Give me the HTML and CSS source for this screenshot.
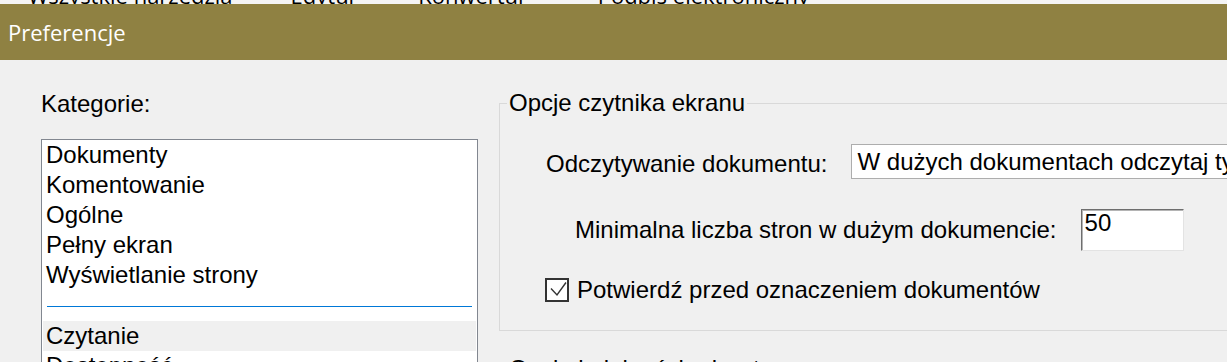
FILE: index.html
```html
<!DOCTYPE html>
<html lang="pl">
<head>
<meta charset="utf-8">
<title>Preferencje</title>
<link rel="stylesheet" href="styles.css">
</head>
<body>
<div class="menubar">
  <div class="menubar-inner">
    <span class="menu-item m1">Wszystkie narzędzia</span>
    <span class="menu-item m2">Edytuj</span>
    <span class="menu-item m3">Konwertuj</span>
    <span class="menu-item m4">Podpis elektroniczny</span>
  </div>
</div>
<div class="titlebar">Preferencje</div>
<div class="main">
  <div class="left">
    <div class="cat-label">Kategorie:</div>
    <div class="listbox">
      <div class="item">Dokumenty</div>
      <div class="item">Komentowanie</div>
      <div class="item">Ogólne</div>
      <div class="item">Pełny ekran</div>
      <div class="item">Wyświetlanie strony</div>
      <div class="sep"><div class="sep-line"></div></div>
      <div class="item sel">Czytanie</div>
      <div class="item">Dostępność</div>
      <div class="item">Formularze</div>
    </div>
  </div>
  <div class="right">
    <fieldset class="group">
      <legend class="legend">Opcje czytnika ekranu</legend>
      <div class="group-body">
        <div class="row row1">
          <span class="lbl lbl1">Odczytywanie dokumentu:</span>
          <div class="combo">W dużych dokumentach odczytaj tylko widoczne strony</div>
        </div>
        <div class="row row2">
          <span class="lbl lbl2">Minimalna liczba stron w dużym dokumencie:</span>
          <div class="num">50</div>
        </div>
        <div class="row row3">
          <span class="check"><svg width="20" height="20" viewBox="0 0 20 20"><polyline points="4,8.5 10,15 19,2.5" fill="none" stroke="#333" stroke-width="1.4"/></svg></span>
          <span class="lbl lbl3">Potwierdź przed oznaczeniem dokumentów</span>
        </div>
      </div>
    </fieldset>
    <fieldset class="group group2">
      <legend class="legend">Opcje kolejności odczytu</legend>
      <div class="group-body tall"></div>
    </fieldset>
  </div>
</div>
</body>
</html>
```

FILE: styles.css
```css
* { box-sizing: border-box; }
html, body { margin: 0; padding: 0; }
body {
  width: 1227px;
  height: 362px;
  overflow: hidden;
  background: #f0f0f0;
  color: #000;
  font-family: "Liberation Sans", Arial, sans-serif;
  font-size: 24px;
}
.menubar {
  height: 4px;
  overflow: hidden;
  background: #f4f4f4;
  font-family: "Open Sans", "Noto Sans", sans-serif;
  font-size: 22px;
  line-height: 22px;
  white-space: nowrap;
}
.menubar-inner {
  display: flex;
  margin-top: -16px;
}
.m1 { margin-left: 28px; }
.m2 { margin-left: 58px; }
.m3 { margin-left: 64px; }
.m4 { margin-left: 74px; }
.titlebar {
  height: 56px;
  background: #8f8142;
  color: #fff;
  display: flex;
  align-items: center;
  padding-left: 8px;
  font-family: "Open Sans", "Noto Sans", sans-serif;
  font-size: 22px;
}
.main {
  display: flex;
  gap: 21px;
  padding: 30px 0 0 41px;
}
.left { width: 437px; flex: 0 0 437px; }
.cat-label {
  height: 28px;
  line-height: 28px;
  margin-bottom: 21px;
}
.listbox {
  border: 1px solid #828790;
  background: #fff;
  padding: 0 1px;
  height: 400px;
}
.item {
  height: 30px;
  line-height: 30px;
  padding-left: 3px;
  white-space: nowrap;
}
.item.sel { background: #f0f0f0; }
.sep {
  height: 31px;
  padding: 16px 4px 0 4px;
}
.sep-line { height: 1px; background: #0078d7; }
.right { flex: 0 0 760px; }
.group {
  margin: 1px 0 0 0;
  padding: 0;
  border: 1px solid #d9d9d9;
  min-width: 0;
}
.legend {
  margin-left: 7px;
  padding: 0 2px;
  line-height: 24px;
}
.group-body {
  padding: 29px 0 28px 46px;
}
.row { display: flex; align-items: flex-start; }
.lbl { line-height: 24px; white-space: nowrap; }
.lbl1 { padding-top: 8px; margin-right: 24px; }
.combo {
  width: 420px;
  height: 35px;
  border: 1px solid #adadad;
  background: #fff;
  padding-left: 5px;
  line-height: 33px;
  white-space: nowrap;
  overflow: hidden;
}
.row2 { margin-top: 30px; padding-left: 29px; }
.lbl2 { padding-top: 9px; margin-right: 24px; }
.num {
  width: 103px;
  height: 42px;
  background: #fff;
  border: 1px solid;
  border-color: #6e6e6e #e3e3e3 #e3e3e3 #6e6e6e;
  box-shadow: inset 1px 1px 0 #b4b4b4;
  padding: 1px 0 0 3px;
  line-height: 24px;
}
.row3 { margin-top: 27px; margin-left: -1px; }
.check {
  width: 24px;
  height: 24px;
  border: 2px solid #333;
  background: #fff;
  display: flex;
  align-items: center;
  justify-content: center;
}
.check svg { display: block; }
.lbl3 { margin-left: 8px; }
.group2 { margin-top: 26px; }
.tall { height: 100px; padding: 0; }
```
